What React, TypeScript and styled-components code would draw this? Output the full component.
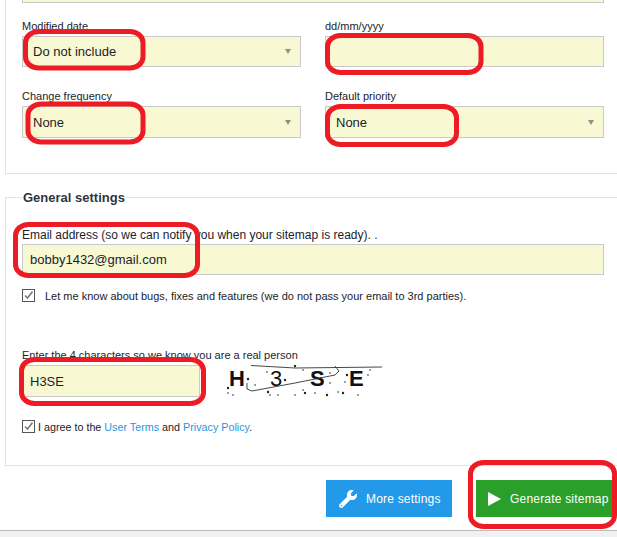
import * as React from "react";
import styled, { createGlobalStyle } from "styled-components";
import { FaWrench } from "react-icons/fa";

const GlobalStyle = createGlobalStyle`
  html, body {
    margin: 0;
    padding: 0;
    background: #fff;
  }
  body {
    font-family: "Liberation Sans", Arial, sans-serif;
    color: #1c1c2c;
  }
`;

const Page = styled.div`
  position: relative;
  width: 617px;
  height: 537px;
  overflow: hidden;
  background: #fff;
`;

const UpperPanel = styled.section`
  box-sizing: border-box;
  height: 174px;
  margin-left: 5px;
  padding: 0 13px 0 16px;
  border-left: 1px solid #e2e2e2;
  border-bottom: 1px solid #e2e2e2;
`;

const TopStub = styled.div`
  box-sizing: border-box;
  height: 3px;
  background: #f8f9d2;
  border: 1px solid #c9c9c9;
  border-top: 0;
  margin-bottom: 18px;
`;

const Grid = styled.div`
  display: grid;
  grid-template-columns: 279px 279px;
  column-gap: 24px;
  row-gap: 24px;
`;

const Field = styled.div`
  display: flex;
  flex-direction: column;
`;

const Label = styled.label<{ $size?: number }>`
  display: block;
  height: 15px;
  font-size: ${(p) => p.$size ?? 11}px;
  line-height: ${(p) => p.$size ?? 11}px;
  white-space: nowrap;
`;

const Input = styled.div<{ $width?: number; $height?: number; $pad?: number }>`
  box-sizing: border-box;
  display: flex;
  align-items: center;
  justify-content: space-between;
  width: ${(p) => (p.$width ? `${p.$width}px` : "100%")};
  height: ${(p) => p.$height ?? 31}px;
  padding: 0 9px 0 ${(p) => p.$pad ?? 10}px;
  background: #f8f9d2;
  border: 1px solid #c9c9c9;
  font-size: 13px;
  color: #1c1c2c;
`;

const Caret = styled.span`
  width: 0;
  height: 0;
  border-left: 3.5px solid transparent;
  border-right: 3.5px solid transparent;
  border-top: 5px solid #8f8f8f;
`;

const Settings = styled.fieldset`
  box-sizing: border-box;
  height: 276px;
  margin: 16px -2px 0 5px;
  padding: 24px 13px 0 16px;
  border: 1px solid #e2e2e2;
  border-right: 0;
  min-width: 0;
`;

const Legend = styled.legend`
  margin-left: 0;
  padding: 0 1px;
  font-size: 13px;
  line-height: 15px;
  font-weight: bold;
  color: #2d3642;
`;

const SettingsBody = styled.div`
  width: 582px;
`;

const CheckRow = styled.div<{ $gap: number; $size: number }>`
  display: flex;
  align-items: flex-start;
  gap: ${(p) => p.$gap}px;
  font-size: ${(p) => p.$size}px;
  line-height: 15px;
  white-space: nowrap;
`;

const Box = styled.span`
  box-sizing: border-box;
  flex: none;
  display: block;
  width: 13px;
  height: 13px;
  border: 1px solid #555;
  background: #fff;

  svg {
    display: block;
  }
`;

const NewsRow = styled.div`
  margin-top: 14px;
`;

const CaptchaBlock = styled.div`
  margin-top: 46px;
`;

const CaptchaRow = styled.div`
  display: flex;
  align-items: flex-start;
  gap: 25px;
`;

const CaptchaImage = styled.svg`
  display: block;
  flex: none;
`;

const AgreeRow = styled.div`
  margin-top: 19px;
`;

const Link = styled.a`
  color: #2a96e3;
  text-decoration: none;
`;

const Actions = styled.div`
  display: flex;
  gap: 24px;
  margin: 14px 0 0 326px;
`;

const Button = styled.button<{ $bg: string; $width: number; $pad: number; $gap: number }>`
  flex: none;
  display: flex;
  align-items: center;
  gap: ${(p) => p.$gap}px;
  box-sizing: border-box;
  width: ${(p) => p.$width}px;
  height: 37px;
  padding: 0 0 0 ${(p) => p.$pad}px;
  border: 0;
  background: ${(p) => p.$bg};
  color: #fff;
  font-family: inherit;
  font-size: 12px;
  letter-spacing: 0.2px;
  white-space: nowrap;
`;

const Footer = styled.div`
  box-sizing: border-box;
  height: 7px;
  margin-top: 13px;
  border-top: 1px solid #bdbdbd;
  background: #f1f1f1;
`;

const Marks = styled.svg`
  position: absolute;
  left: 0;
  top: 0;
  pointer-events: none;
`;

const markBoxes = [
  { x: 25.5, y: 31.5, w: 117.5, h: 36.5 },
  { x: 28, y: 104, w: 115, h: 38 },
  { x: 327.5, y: 35.5, w: 153.5, h: 37 },
  { x: 327.5, y: 106.5, w: 129, h: 38 },
  { x: 15.5, y: 224.5, w: 182, h: 51 },
  { x: 21.5, y: 359.5, w: 182, h: 44 },
  { x: 470.5, y: 462.5, w: 144, h: 64 },
];

const captchaDots = [
  [3, 23], [3, 28], [8, 30], [23, 14], [30, 20], [42, 7], [43, 27], [45, 30], [53, 30], [60, 15],
  [70, 30], [78, 25], [80, 28], [78, 5], [90, 28], [102, 30], [105, 18], [113, 27], [118, 28],
  [133, 30], [120, 17], [122, 10], [143, 10], [145, 5], [70, 1], [105, 8], [96, 13], [88, 8],
];

const Check = () => (
  <Box>
    <svg width="11" height="11" viewBox="0 0 11 11" fill="none" stroke="#777" strokeWidth="1.5">
      <path d="M2 5.5 L4.5 8 L9.5 1.5" />
    </svg>
  </Box>
);

const Captcha = () => (
  <CaptchaImage width="160" height="36" viewBox="0 0 160 36">
    <g fontFamily="Liberation Sans, Arial, sans-serif" fill="#111" fontSize="22">
      <text x="4" y="21" fontWeight="bold">H</text>
      <text x="45" y="21">3</text>
      <text x="85" y="21" fontWeight="bold">S</text>
      <text x="124" y="21" fontWeight="bold">E</text>
    </g>
    <path
      d="M26 0.5 L70 3 L157 2 M22 18 L22 24 L27 26 L70 18 L110 10 L114 6 L110 1"
      fill="none"
      stroke="#333"
      strokeWidth="0.9"
    />
    {captchaDots.map(([cx, cy], i) => (
      <circle key={i} cx={cx} cy={cy} r={i % 3 === 0 ? 1.2 : 0.8} fill="#222" />
    ))}
  </CaptchaImage>
);

export default function App() {
  return (
    <Page>
      <GlobalStyle />
      <UpperPanel>
        <TopStub />
        <Grid>
          <Field>
            <Label>Modified date</Label>
            <Input>
              Do not include
              <Caret />
            </Input>
          </Field>
          <Field>
            <Label>dd/mm/yyyy</Label>
            <Input />
          </Field>
          <Field>
            <Label>Change frequency</Label>
            <Input $height={32}>
              None
              <Caret />
            </Input>
          </Field>
          <Field>
            <Label>Default priority</Label>
            <Input $height={32}>
              None
              <Caret />
            </Input>
          </Field>
        </Grid>
      </UpperPanel>
      <Settings>
        <Legend>General settings</Legend>
        <SettingsBody>
          <Label $size={12}>Email address (so we can notify you when your sitemap is ready). .</Label>
          <Input $pad={7}>bobby1432@gmail.com</Input>
          <NewsRow>
            <CheckRow $gap={10} $size={11}>
              <Check />
              Let me know about bugs, fixes and features (we do not pass your email to 3rd parties).
            </CheckRow>
          </NewsRow>
          <CaptchaBlock>
            <Label>Enter the 4 characters so we know you are a real person</Label>
            <CaptchaRow>
              <Input $width={178} $pad={7} $height={32}>H3SE</Input>
              <Captcha />
            </CaptchaRow>
          </CaptchaBlock>
          <AgreeRow>
            <CheckRow $gap={3} $size={10.75}>
              <Check />
              <span>
                I agree to the <Link>User Terms</Link> and <Link>Privacy Policy</Link>.
              </span>
            </CheckRow>
          </AgreeRow>
        </SettingsBody>
      </Settings>
      <Actions>
        <Button $bg="#2299e9" $width={126} $pad={13} $gap={9}>
          <FaWrench size={18} />
          More settings
        </Button>
        <Button $bg="#2aa02b" $width={137} $pad={12} $gap={9}>
          <svg width="13" height="14" viewBox="0 0 13 14">
            <path d="M0 0 L13 7 L0 14 Z" fill="#fff" />
          </svg>
          Generate sitemap
        </Button>
      </Actions>
      <Footer />
      <Marks width="617" height="537" fill="none" stroke="#ed1c24" strokeWidth="5">
        {markBoxes.map((b, i) => (
          <rect key={i} x={b.x} y={b.y} width={b.w} height={b.h} rx="13" ry="11" />
        ))}
      </Marks>
    </Page>
  );
}
